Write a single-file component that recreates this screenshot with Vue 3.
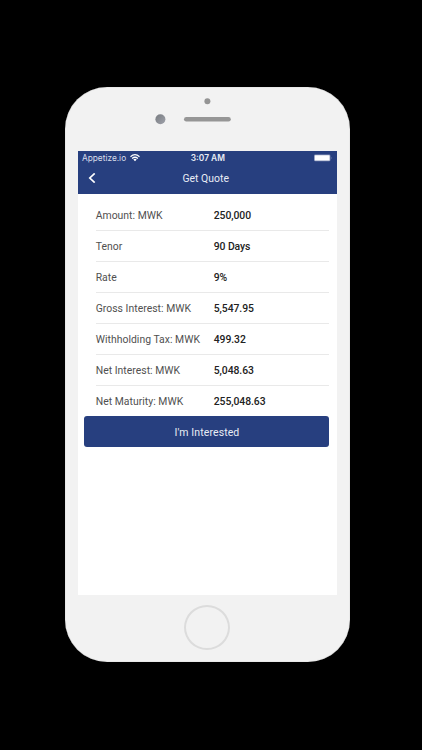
<script setup>
const rows = [
  { label: 'Amount: MWK', value: '250,000' },
  { label: 'Tenor', value: '90 Days' },
  { label: 'Rate', value: '9%' },
  { label: 'Gross Interest: MWK', value: '5,547.95' },
  { label: 'Withholding Tax: MWK', value: '499.32' },
  { label: 'Net Interest: MWK', value: '5,048.63' },
  { label: 'Net Maturity: MWK', value: '255,048.63' },
]
</script>

<template>
  <div class="stage">
    <div class="phone">
      <div class="bezel">
        <svg width="285" height="63" viewBox="0 0 285 63">
          <defs>
            <linearGradient id="lens" x1="0" y1="0" x2="1" y2="1">
              <stop offset="0" stop-color="#777b80" />
              <stop offset="1" stop-color="#a0a2ab" />
            </linearGradient>
          </defs>
          <circle cx="142.4" cy="14.3" r="3" fill="#949494" />
          <circle cx="95.4" cy="32.2" r="5" fill="url(#lens)" />
          <rect x="119" y="30" width="46.8" height="4.6" rx="2.3" fill="#969696" />
        </svg>
      </div>
      <main class="screen">
        <div class="top">
          <div class="status">
            <div class="carrier">
              <span>Appetize.io</span>
              <svg width="10" height="8" viewBox="0 0 10 8" fill="none" stroke="#fff" stroke-width="1.25">
                <path d="M.5 2.7Q5-1.3 9.5 2.7M2.1 4.5Q5 2 7.9 4.5" />
                <path d="M3.3 5.5Q5 4.2 6.7 5.5L5 7.3Z" fill="#fff" stroke="none" />
              </svg>
            </div>
            <span class="time">3:07 AM</span>
            <svg class="battery" width="19" height="8" viewBox="0 0 19 8">
              <rect x="0" y=".5" width="16.4" height="6.8" rx="1.3" fill="#8793b8" />
              <rect x=".8" y="1.2" width="14.8" height="5.4" rx=".6" fill="#fff" />
              <path d="M17.1 2.9q1.1 1.1 0 2.2z" fill="#9ba6c6" />
            </svg>
          </div>
          <header class="nav">
            <svg class="back" width="8" height="10" viewBox="0 0 8 10" fill="none" stroke="#fff" stroke-width="1.7">
              <path d="M6.7.4L1.8 5l4.9 4.6" />
            </svg>
            <span>Get Quote</span>
          </header>
        </div>
        <div class="list">
          <div v-for="row in rows" :key="row.label" class="row">
            <span class="label">{{ row.label }}</span>
            <span class="value">{{ row.value }}</span>
          </div>
        </div>
        <button class="cta">I'm Interested</button>
      </main>
      <div class="home"></div>
    </div>
  </div>
</template>

<style>
body {
  background: #000;
}
</style>

<style scoped>
.stage {
  box-sizing: border-box;
  height: 750px;
  padding: 87px 0 0 65px;
  background: #000;
  overflow: hidden;
  font-family: Roboto, sans-serif;
}
.phone {
  box-sizing: border-box;
  width: 285px;
  height: 574.5px;
  border-radius: 42px;
  background: #f2f2f2;
  box-shadow: inset 0 0 1px #999;
  display: flex;
  flex-direction: column;
}
.bezel {
  height: 63.5px;
}
.screen {
  width: 259px;
  height: 444.5px;
  margin-left: 12.7px;
  background: #fff;
}
.top {
  height: 43px;
  background: #273f7f;
  color: #fff;
}
.status {
  height: 14px;
  display: grid;
  grid-template-columns: 1fr auto 1fr;
  align-items: center;
  padding: 0 3px 0 4.3px;
  line-height: 14px;
}
.carrier {
  display: flex;
  align-items: center;
  gap: 4px;
  color: #d9deeb;
  font-family: Inter, sans-serif;
  font-size: 8.3px;
}
.time {
  font-family: Inter, sans-serif;
  font-size: 8.4px;
  font-weight: 600;
  color: #e9edf5;
}
.battery {
  justify-self: end;
  margin-right: 0.5px;
}
.nav {
  height: 27px;
  display: grid;
  grid-template-columns: 20px 1fr 23px;
  align-items: center;
  text-align: center;
  font-size: 10.4px;
  letter-spacing: 0.03px;
  color: #e9edf5;
}
.back {
  justify-self: end;
  margin-right: 2px;
}
.list {
  margin: 0 7.5px 0 18px;
  padding-top: 6.5px;
}
.row {
  box-sizing: border-box;
  height: 31px;
  display: grid;
  grid-template-columns: 118px 1fr;
  align-items: center;
  padding-top: 1px;
  border-bottom: 1px solid #e9e9e9;
  font-size: 10.4px;
  letter-spacing: 0.03px;
  white-space: nowrap;
}
.row:last-child {
  height: 30px;
  border-bottom: 0;
}
.label {
  color: #505050;
}
.value {
  color: #222;
  font-weight: 500;
  letter-spacing: -0.06px;
}
.cta {
  display: block;
  width: 245px;
  height: 30.5px;
  margin: 0.2px 0 0 6.8px;
  padding: 1.5px 0 0;
  border: 0;
  border-radius: 3px;
  background: #273f7f;
  color: #e9edf5;
  font: 10.5px Roboto, sans-serif;
  letter-spacing: 0.1px;
}
.home {
  box-sizing: border-box;
  width: 46px;
  height: 45px;
  margin: 9.8px 0 0 119px;
  border: 2px solid #dcdcdc;
  border-radius: 50%;
}
</style>
